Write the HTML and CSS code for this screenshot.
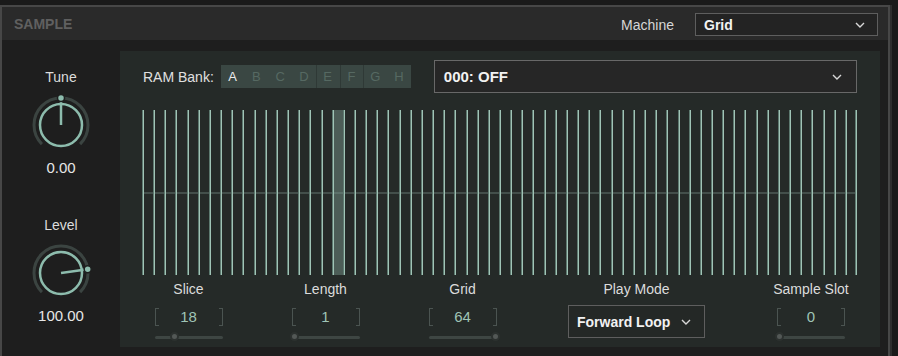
FILE: index.html
```html
<!DOCTYPE html>
<html lang="en">
<head>
    <meta charset="UTF-8">
    <title>Sample</title>
    <link rel="stylesheet" href="styles.css">
</head>
<body>
    <div class="panel">
        <div class="panel-head">
            <span class="panel-title">SAMPLE</span>
            <div class="machine">
                <span class="machine-label">Machine</span>
                <div class="select select-machine">
                    <span>Grid</span>
                    <svg class="chevron" width="10" height="6" viewBox="0 0 10 6"><polyline points="1,1 5,5 9,1"/></svg>
                </div>
            </div>
        </div>

        <div class="panel-body">
            <!-- Knobs -->
            <div class="knobs">
                <div class="knob-group">
                    <div class="knob-label">Tune</div>
                    <svg class="knob" width="64" height="64" viewBox="0 0 64 64">
                        <path class="knob-track" d="M12.91 51.09 A27 27 0 1 1 51.09 51.09"/>
                        <circle class="knob-ring" cx="32" cy="32" r="21"/>
                        <line class="knob-pointer" x1="32" y1="32" x2="32" y2="5"/>
                        <circle class="knob-dot" cx="32" cy="5" r="3.5"/>
                    </svg>
                    <div class="knob-value">0.00</div>
                </div>
                <div class="knob-group">
                    <div class="knob-label">Level</div>
                    <svg class="knob" width="64" height="64" viewBox="0 0 64 64">
                        <path class="knob-track" d="M12.91 51.09 A27 27 0 1 1 51.09 51.09"/>
                        <circle class="knob-ring" cx="32" cy="32" r="21"/>
                        <line class="knob-pointer" x1="32" y1="32" x2="58.7" y2="28.2"/>
                        <circle class="knob-dot" cx="58.7" cy="28.2" r="3.5"/>
                    </svg>
                    <div class="knob-value">100.00</div>
                </div>
            </div>

            <!-- Slice editor -->
            <div class="editor">
                <div class="editor-top">
                    <span class="bank-label">RAM Bank:</span>
                    <div class="banks">
                        <span class="bank active">A</span>
                        <span class="bank">B</span>
                        <span class="bank">C</span>
                        <span class="bank">D</span>
                        <span class="bank split">E</span>
                        <span class="bank split">F</span>
                        <span class="bank split">G</span>
                        <span class="bank">H</span>
                    </div>
                    <div class="select select-sample">
                        <span>000: OFF</span>
                        <svg class="chevron" width="10" height="6" viewBox="0 0 10 6"><polyline points="1,1 5,5 9,1"/></svg>
                    </div>
                </div>

                <div class="slices" id="slices"></div>

                <div class="params">
                    <div class="param">
                        <div class="param-label">Slice</div>
                        <div class="field">18</div>
                        <div class="slider"><span class="thumb" style="left: 28%"></span></div>
                    </div>
                    <div class="param">
                        <div class="param-label">Length</div>
                        <div class="field">1</div>
                        <div class="slider"><span class="thumb" style="left: 3%"></span></div>
                    </div>
                    <div class="param">
                        <div class="param-label">Grid</div>
                        <div class="field">64</div>
                        <div class="slider"><span class="thumb" style="left: 98%"></span></div>
                    </div>
                    <div class="param">
                        <div class="param-label">Play Mode</div>
                        <div class="select select-mode">
                            <span>Forward Loop</span>
                            <svg class="chevron" width="10" height="6" viewBox="0 0 10 6"><polyline points="1,1 5,5 9,1"/></svg>
                        </div>
                    </div>
                    <div class="param">
                        <div class="param-label">Sample Slot</div>
                        <div class="field">0</div>
                        <div class="slider"><span class="thumb" style="left: 3%"></span></div>
                    </div>
                </div>
            </div>
        </div>
    </div>

    <script>
        // Build the 64 slice columns, highlight the current one
        const gridSize = 64;
        const currentSlice = 18;
        const slices = document.getElementById("slices");
        for (let i = 1; i <= gridSize; i++) {
            const cell = document.createElement("div");
            cell.className = i === currentSlice ? "slice current" : "slice";
            slices.appendChild(cell);
        }
    </script>
</body>
</html>
```

FILE: styles.css
```css
body {
    margin: 0;
    width: 898px;
    height: 356px;
    overflow: hidden;
    background-color: #1a1a1a;
    font-family: "Liberation Sans", Arial, sans-serif;
    color: #dedede;
}

.panel {
    margin-top: 5px;
    width: 886px;
    height: 351px;
    border: 2px solid #474747;
    border-bottom: none;
    box-shadow: 2px 0 0 #2e2e2e;
    background-color: #1e1e1e;
}

.panel-head {
    height: 33px;
    background-color: #2a2a2a;
    display: flex;
    align-items: center;
    justify-content: space-between;
    padding: 0 10px 0 12px;
}

.panel-title {
    font-size: 14px;
    font-weight: bold;
    color: #606060;
}

.machine {
    display: flex;
    align-items: center;
    gap: 21px;
    padding-top: 2px;
}

.machine-label {
    font-size: 14px;
    color: #d6d6d6;
}

.select {
    box-sizing: border-box;
    display: flex;
    align-items: center;
    justify-content: space-between;
    border: 1px solid #5e5e5e;
    background-color: #232323;
    font-weight: bold;
    color: #f2f2f2;
}

.chevron {
    flex-shrink: 0;
}

.chevron polyline {
    fill: none;
    stroke: #d8d8d8;
    stroke-width: 1.4;
}

.select-machine {
    width: 183px;
    height: 23px;
    padding: 0 12px 0 8px;
    font-size: 14px;
}

.panel-body {
    display: flex;
    padding-top: 11px;
}

/* Knobs */
.knobs {
    width: 118px;
    padding-top: 18px;
    display: flex;
    flex-direction: column;
    gap: 41px;
}

.knob-group {
    display: flex;
    flex-direction: column;
    align-items: center;
}

.knob-label {
    font-size: 14px;
    line-height: 16px;
    color: #dcdcdc;
}

.knob {
    display: block;
    margin-top: 8px;
}

.knob-track {
    fill: none;
    stroke: #3b4441;
    stroke-width: 3;
}

.knob-ring {
    fill: none;
    stroke: #8dbcad;
    stroke-width: 2.5;
}

.knob-pointer {
    stroke: #8dbcad;
    stroke-width: 2.5;
}

.knob-dot {
    fill: #8dbcad;
    stroke: #1e1e1e;
    stroke-width: 1.5;
}

.knob-value {
    margin-top: 3px;
    font-size: 15px;
    line-height: 16px;
    color: #e6e6e6;
}

/* Editor */
.editor {
    box-sizing: border-box;
    width: 760px;
    height: 296px;
    background-color: #252a28;
    padding: 9px 23px 0;
}

.editor-top {
    display: flex;
    align-items: center;
    height: 33px;
}

.bank-label {
    font-size: 14px;
    color: #e0e0e0;
    margin-right: 7px;
}

.banks {
    width: 190px;
    height: 23px;
    display: grid;
    grid-template-columns: repeat(8, 1fr);
    background-color: #3a4743;
}

.bank {
    display: flex;
    align-items: center;
    justify-content: center;
    font-size: 13px;
    color: #566962;
}

.bank.active {
    color: #ececec;
}

.bank.split {
    box-shadow: inset 1px 0 0 #2f3936;
}

.select-sample {
    flex: 1;
    height: 33px;
    margin-left: 23px;
    padding: 0 14px 0 9px;
    font-size: 15px;
    border-color: #686868;
    background-color: #262626;
}

.slices {
    margin-top: 17px;
    height: 165px;
    display: grid;
    grid-template-columns: repeat(64, 1fr);
    box-shadow: inset -1px 0 0 #9fc3b5, inset -2px 0 0 #5f7c72;
    background: linear-gradient(to bottom, transparent 82px, #434f4b 82px, #434f4b 84px, transparent 84px);
}

.slice {
    border-left: 1px solid #a0c4b6;
    box-shadow: -1px 0 0 #5d7a70;
}

.slice.current {
    background-color: rgba(125, 155, 145, 0.45);
}

/* Parameters */
.params {
    margin: 6px -23px 0;
    display: grid;
    grid-template-columns: 137px 137px 137px 211px 138px;
}

.param {
    display: flex;
    flex-direction: column;
    align-items: center;
}

.param-label {
    font-size: 14px;
    line-height: 16px;
    color: #dcdcdc;
}

.field {
    position: relative;
    width: 68px;
    height: 21px;
    margin-top: 9px;
    text-align: center;
    font-size: 15px;
    line-height: 21px;
    color: #9fc4b6;
}

.field::before,
.field::after {
    content: "";
    position: absolute;
    top: 2px;
    width: 3px;
    height: 16px;
    border: 1px solid #4b5451;
}

.field::before {
    left: 0;
    border-right: none;
}

.field::after {
    right: 0;
    border-left: none;
}

.slider {
    position: relative;
    width: 68px;
    height: 8px;
    margin-top: 6px;
}

.slider::before {
    content: "";
    position: absolute;
    left: 0;
    right: 0;
    top: 3px;
    height: 3px;
    background-color: #3e4643;
    border-radius: 2px;
}

.thumb {
    position: absolute;
    top: -1px;
    width: 9px;
    height: 9px;
    margin-left: -4px;
    border-radius: 50%;
    box-sizing: border-box;
    background-color: #535856;
    border: 2px solid #2c312f;
}

.select-mode {
    width: 137px;
    height: 33px;
    margin-top: 8px;
    padding: 0 13px 0 8px;
    font-size: 14px;
    background-color: #242826;
}
```
